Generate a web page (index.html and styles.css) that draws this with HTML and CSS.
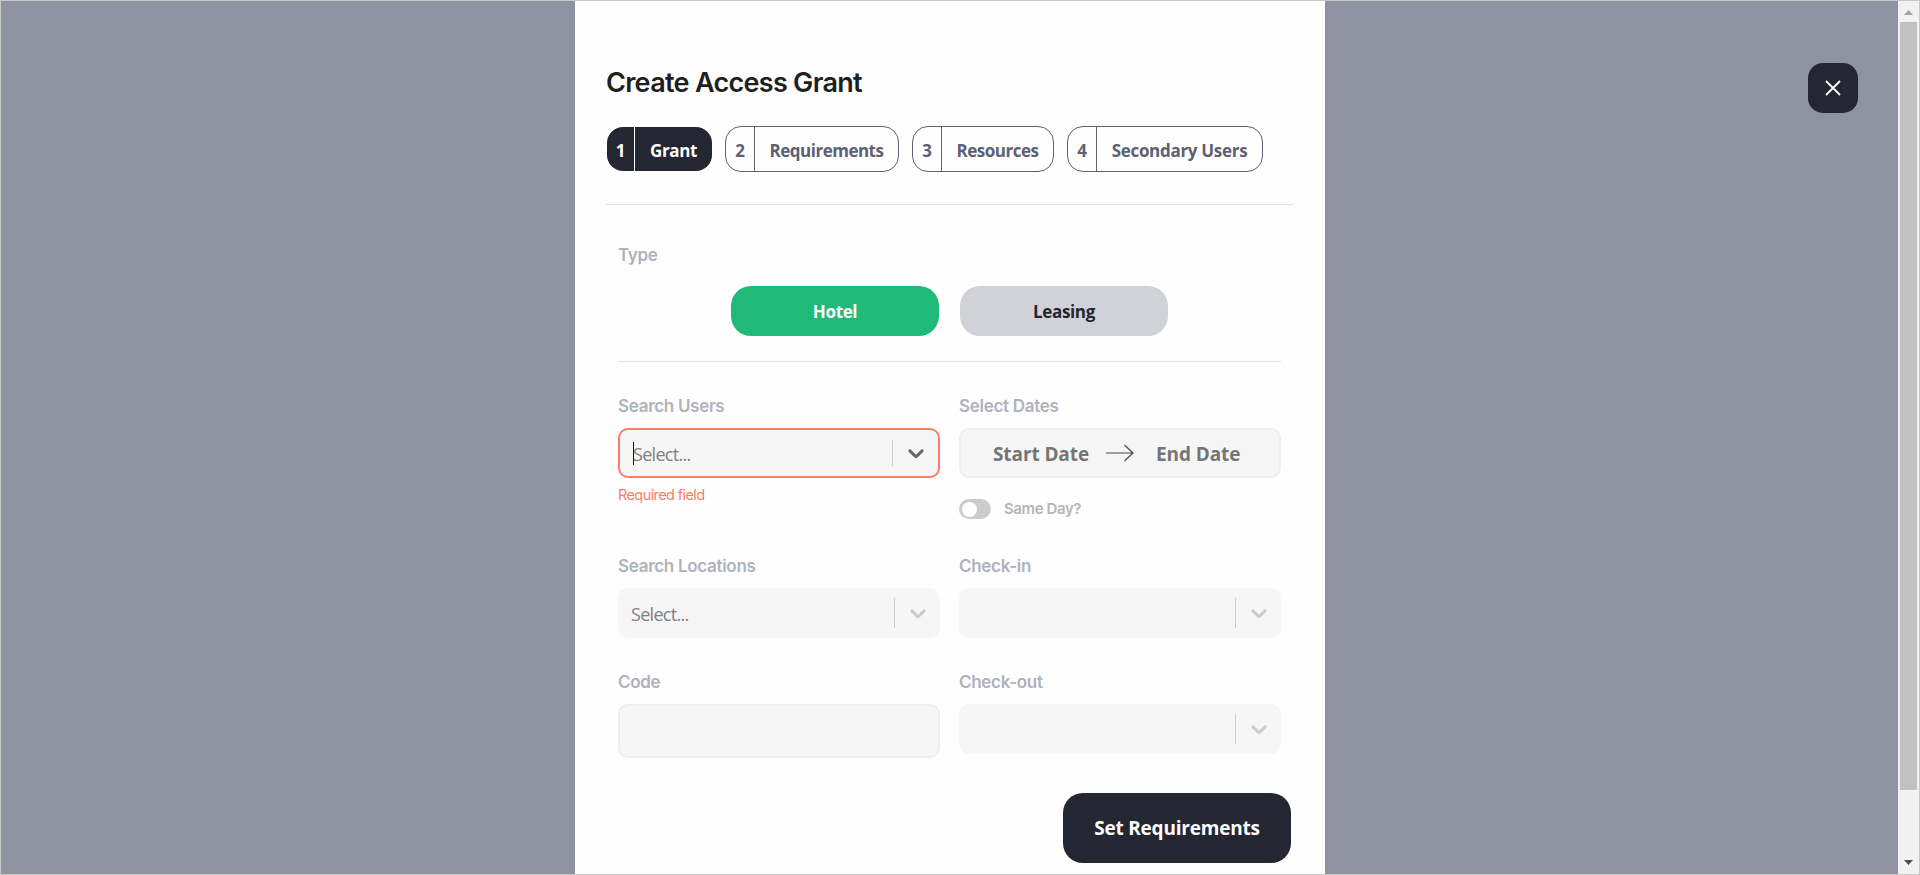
FILE: index.html
```html
<!DOCTYPE html>
<html lang="en">
<head>
<meta charset="utf-8">
<title>Create Access Grant</title>
<link rel="stylesheet" href="styles.css">
</head>
<body>
<div class="frame">
  <main class="backdrop">
    <section class="panel">
      <h1 class="title"><span class="t-title">Create Access Grant</span></h1>
      <nav class="steps">
        <div class="step step-active w1"><span class="num">1</span><span class="name"><span class="t-grant">Grant</span></span></div>
        <div class="step w2"><span class="num">2</span><span class="name"><span class="t-req">Requirements</span></span></div>
        <div class="step w3"><span class="num">3</span><span class="name"><span class="t-res">Resources</span></span></div>
        <div class="step w4"><span class="num">4</span><span class="name"><span class="t-sec">Secondary Users</span></span></div>
      </nav>
      <form class="form">
        <div class="label">Type</div>
        <div class="types">
          <button type="button" class="type type-on">Hotel</button>
          <button type="button" class="type">Leasing</button>
        </div>
        <div class="grid">
          <div class="field">
            <div class="label">Search Users</div>
            <div class="select select-error">
              <span class="caret"></span><span class="placeholder">Select...</span>
              <span class="divider"></span>
              <svg class="chevron" viewBox="0 0 20 20"><path d="M4.516 7.548c0.436-0.446 1.043-0.481 1.576 0l3.908 3.747 3.908-3.747c0.533-0.481 1.141-0.446 1.574 0 0.436 0.445 0.408 1.197 0 1.615-0.406 0.418-4.695 4.502-4.695 4.502-0.217 0.223-0.502 0.335-0.787 0.335s-0.57-0.112-0.789-0.335c0 0-4.287-4.084-4.695-4.502s-0.436-1.17 0-1.615z"/></svg>
            </div>
            <div class="error">Required field</div>
          </div>
          <div class="field">
            <div class="label">Select Dates</div>
            <div class="dates">
              <span class="start">Start Date</span>
              <svg class="arrow" viewBox="0 0 28 18"><path d="M0 9H27M18.500 1L27 9L18.500 17"/></svg>
              <span class="end">End Date</span>
            </div>
            <div class="same"><span class="toggle"><span class="knob"></span></span><span class="same-text">Same Day?</span></div>
          </div>
          <div class="field">
            <div class="label">Search Locations</div>
            <div class="select">
              <span class="placeholder">Select...</span>
              <span class="divider"></span>
              <svg class="chevron" viewBox="0 0 20 20"><path d="M4.516 7.548c0.436-0.446 1.043-0.481 1.576 0l3.908 3.747 3.908-3.747c0.533-0.481 1.141-0.446 1.574 0 0.436 0.445 0.408 1.197 0 1.615-0.406 0.418-4.695 4.502-4.695 4.502-0.217 0.223-0.502 0.335-0.787 0.335s-0.57-0.112-0.789-0.335c0 0-4.287-4.084-4.695-4.502s-0.436-1.17 0-1.615z"/></svg>
            </div>
          </div>
          <div class="field">
            <div class="label">Check-in</div>
            <div class="select">
              <span class="divider"></span>
              <svg class="chevron" viewBox="0 0 20 20"><path d="M4.516 7.548c0.436-0.446 1.043-0.481 1.576 0l3.908 3.747 3.908-3.747c0.533-0.481 1.141-0.446 1.574 0 0.436 0.445 0.408 1.197 0 1.615-0.406 0.418-4.695 4.502-4.695 4.502-0.217 0.223-0.502 0.335-0.787 0.335s-0.57-0.112-0.789-0.335c0 0-4.287-4.084-4.695-4.502s-0.436-1.17 0-1.615z"/></svg>
            </div>
          </div>
          <div class="field">
            <div class="label">Code</div>
            <div class="code"></div>
          </div>
          <div class="field">
            <div class="label">Check-out</div>
            <div class="select">
              <span class="divider"></span>
              <svg class="chevron" viewBox="0 0 20 20"><path d="M4.516 7.548c0.436-0.446 1.043-0.481 1.576 0l3.908 3.747 3.908-3.747c0.533-0.481 1.141-0.446 1.574 0 0.436 0.445 0.408 1.197 0 1.615-0.406 0.418-4.695 4.502-4.695 4.502-0.217 0.223-0.502 0.335-0.787 0.335s-0.57-0.112-0.789-0.335c0 0-4.287-4.084-4.695-4.502s-0.436-1.17 0-1.615z"/></svg>
            </div>
          </div>
        </div>
      </form>
      <button type="button" class="submit">Set Requirements</button>
    </section>
    <button type="button" class="close" aria-label="Close"><svg viewBox="0 0 16 16"><path d="M1 1L15 15M15 1L1 15"/></svg></button>
  </main>
  <aside class="scrollbar">
    <svg class="tri tri-up" viewBox="0 0 9 5"><path d="M0 5L4.500 0L9 5Z"/></svg>
    <div class="thumb"></div>
    <svg class="tri tri-down" viewBox="0 0 9 5"><path d="M0 0L4.500 5L9 0Z"/></svg>
  </aside>
</div>
</body>
</html>
```
FILE: styles.css
```css
* { box-sizing: border-box; }
body { margin: 0; overflow: hidden; font-family: "Open Sans", "Noto Sans", sans-serif; }
button { border: 0; padding: 0; font: inherit; }
.frame { display: flex; width: 1920px; height: 875px; border: 1px solid #c8c8c8; }
.backdrop { position: relative; flex: 1; background: #8f92a1; padding-left: 574px; }
.panel { display: flex; flex-direction: column; width: 750px; height: 873px; padding: 62px 32px 0 31px; background: #fefefe; }
.title { margin: 0; height: 63px; font: 600 27px/40px Inter, sans-serif; color: #1d1f20; white-space: nowrap; }
.t-title { letter-spacing: -0.7px; }
.steps { display: flex; gap: 13px; height: 79px; width: 687px; border-bottom: 1px solid #e2e2e2; white-space: nowrap; font-weight: 700; font-size: 17px; line-height: 24px; }
.step { display: flex; height: 46px; border: 1px solid #5e6073; border-radius: 16px; color: #5e6073; background: #fefefe; overflow: hidden; }
.step-active { height: 44px; margin: 1px 0 0 1px; border: 0; background: #242631; color: #fff; }
.w1 { width: 105px; }
.w2 { width: 174px; }
.w3 { width: 142px; }
.w4 { width: 196px; }
.num { display: flex; align-items: center; justify-content: center; width: 29px; padding-top: 4px; border-right: 1px solid currentColor; }
.step-active .num { width: 28px; }
.name { flex: 1; display: flex; align-items: center; justify-content: center; padding-top: 4px; }
.t-grant { letter-spacing: -0.4px; }
.t-req, .t-res { letter-spacing: -0.5px; }
.t-sec { letter-spacing: -0.3px; }
.form { width: 663px; margin-left: 12px; }
.label { height: 36px; padding-top: 2px; font: 600 17px/24px Inter, sans-serif; letter-spacing: -0.3px; color: #b0b2bb; white-space: nowrap; }
.form > .label { margin-top: 38px; padding-top: 0; height: 43px; }
.types { display: flex; justify-content: center; gap: 21px; height: 76px; border-bottom: 1px solid #e2e2e2; }
.type { width: 208px; height: 50px; padding-top: 1px; border-radius: 20px; background: #d1d2d7; color: #242631; font-weight: 700; font-size: 17px; letter-spacing: -0.35px; }
.type-on { background: #20ba78; color: #fff; }
.grid { display: grid; grid-template-columns: 322px 322px; column-gap: 19px; grid-template-rows: 160px 116px 116px; padding-top: 30px; }
.select, .dates, .code { display: flex; align-items: center; height: 50px; border-radius: 10px; background: #f6f6f6; }
.select { padding: 0 9px 0 13px; }
.select-error { border: 2px solid #ff7b68; }
.code { height: 54px; border: 2px solid #eee; }
.dates { border: 2px solid #eee; font-weight: 700; font-size: 19px; letter-spacing: -0.1px; color: #757575; white-space: nowrap; }
.caret { width: 1px; height: 23px; margin-right: -1px; background: #111; }
.placeholder { padding-top: 2px; font-size: 18px; letter-spacing: -0.7px; color: #808080; }
.divider { width: 1px; height: 30px; margin: 0 10px 0 auto; background: #ccc; }
.select-error .divider { height: 26px; }
.chevron { width: 26px; height: 26px; fill: #ccc; }
.select-error .chevron { fill: #666; }
.start, .end { padding-top: 2px; }
.start { width: 96px; margin-left: 32px; }
.arrow { width: 28px; height: 18px; margin: 0 22px 0 17px; fill: none; stroke: #484848; stroke-width: 1.2; }
.error { height: 32px; font: 400 14.5px/33px Inter, sans-serif; letter-spacing: -0.6px; color: #ff7b68; }
.same { display: flex; align-items: center; gap: 13px; height: 20px; margin-top: 21px; font: 600 15px/20px Inter, sans-serif; letter-spacing: -0.4px; color: #b5b5b5; }
.toggle { display: flex; align-items: center; width: 32px; height: 20px; padding-left: 3px; border-radius: 10px; background: #ccc; }
.knob { width: 15px; height: 15px; border-radius: 50%; background: #fff; }
.submit { align-self: flex-end; flex: none; margin-top: 9px; margin-right: 2px; width: 228px; height: 70px; border-radius: 20px; background: #242631; color: #fff; font-weight: 700; font-size: 19px; letter-spacing: -0.2px; }
.close { position: absolute; top: 62px; right: 40px; display: flex; align-items: center; justify-content: center; width: 50px; height: 50px; border-radius: 15px; background: #242631; }
.close svg { width: 16px; height: 16px; margin-right: 1px; fill: none; stroke: #fff; stroke-width: 1.8; }
.scrollbar { display: flex; flex-direction: column; align-items: center; width: 21px; background: #f1f1f1; }
.tri { width: 9px; height: 5px; fill: #a3a3a3; }
.tri-up { margin: 9px 0 7px; }
.thumb { width: 17px; height: 768px; background: #c1c1c1; }
.tri-down { margin-top: 70px; fill: #505050; }
```
